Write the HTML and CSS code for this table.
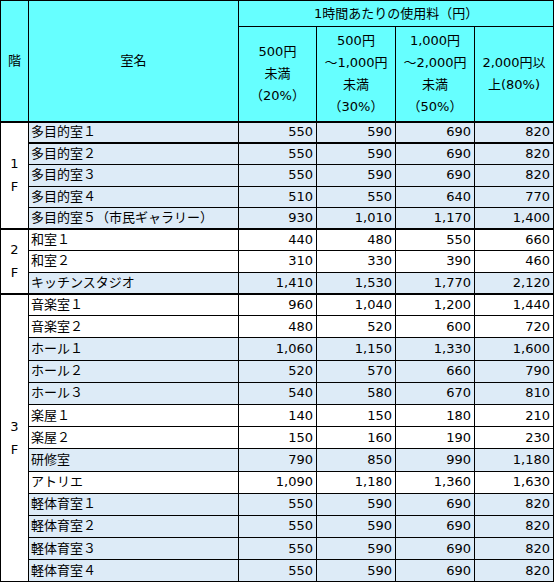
FILE: index.html
```html
<!DOCTYPE html>
<html lang="ja">
<head>
<meta charset="utf-8">
<title>使用料</title>
<link rel="stylesheet" href="styles.css">
</head>
<body>
<table class="fees">
  <colgroup>
    <col class="c-floor"><col class="c-name"><col class="c-num1"><col class="c-num"><col class="c-num"><col class="c-num">
  </colgroup>
  <thead>
    <tr class="h1">
      <th rowspan="2">階</th>
      <th rowspan="2">室名</th>
      <th colspan="4">1時間あたりの使用料（円）</th>
    </tr>
    <tr class="h2">
      <th>500円<br>未満<br>（20%）</th>
      <th>500円<br>～1,000円<br>未満<br>（30%）</th>
      <th>1,000円<br>～2,000円<br>未満<br>（50%）</th>
      <th>2,000円以<br>上(80%)</th>
    </tr>
  </thead>
  <tbody class="f12">
    <tr class="b thick"><td class="floor" rowspan="5">1<br>F</td><td class="name">多目的室１</td><td>550</td><td>590</td><td>690</td><td>820</td></tr>
    <tr class="b thick"><td class="name">多目的室２</td><td>550</td><td>590</td><td>690</td><td>820</td></tr>
    <tr class="b"><td class="name">多目的室３</td><td>550</td><td>590</td><td>690</td><td>820</td></tr>
    <tr class="b"><td class="name">多目的室４</td><td>510</td><td>550</td><td>640</td><td>770</td></tr>
    <tr class="b"><td class="name">多目的室５（市民ギャラリー）</td><td>930</td><td>1,010</td><td>1,170</td><td>1,400</td></tr>
  </tbody>
  <tbody class="f12">
    <tr class="w thick"><td class="floor" rowspan="3">2<br>F</td><td class="name">和室１</td><td>440</td><td>480</td><td>550</td><td>660</td></tr>
    <tr class="w"><td class="name">和室２</td><td>310</td><td>330</td><td>390</td><td>460</td></tr>
    <tr class="b"><td class="name">キッチンスタジオ</td><td>1,410</td><td>1,530</td><td>1,770</td><td>2,120</td></tr>
  </tbody>
  <tbody class="f3">
    <tr class="w thick"><td class="floor" rowspan="13">3<br>F</td><td class="name">音楽室１</td><td>960</td><td>1,040</td><td>1,200</td><td>1,440</td></tr>
    <tr class="w"><td class="name">音楽室２</td><td>480</td><td>520</td><td>600</td><td>720</td></tr>
    <tr class="b"><td class="name">ホール１</td><td>1,060</td><td>1,150</td><td>1,330</td><td>1,600</td></tr>
    <tr class="b"><td class="name">ホール２</td><td>520</td><td>570</td><td>660</td><td>790</td></tr>
    <tr class="b"><td class="name">ホール３</td><td>540</td><td>580</td><td>670</td><td>810</td></tr>
    <tr class="w"><td class="name">楽屋１</td><td>140</td><td>150</td><td>180</td><td>210</td></tr>
    <tr class="w"><td class="name">楽屋２</td><td>150</td><td>160</td><td>190</td><td>230</td></tr>
    <tr class="b"><td class="name">研修室</td><td>790</td><td>850</td><td>990</td><td>1,180</td></tr>
    <tr class="w"><td class="name">アトリエ</td><td>1,090</td><td>1,180</td><td>1,360</td><td>1,630</td></tr>
    <tr class="b"><td class="name">軽体育室１</td><td>550</td><td>590</td><td>690</td><td>820</td></tr>
    <tr class="b"><td class="name">軽体育室２</td><td>550</td><td>590</td><td>690</td><td>820</td></tr>
    <tr class="b"><td class="name">軽体育室３</td><td>550</td><td>590</td><td>690</td><td>820</td></tr>
    <tr class="b"><td class="name">軽体育室４</td><td>550</td><td>590</td><td>690</td><td>820</td></tr>
  </tbody>
</table>
</body>
</html>
```
FILE: styles.css
```css
html, body {
  margin: 0;
  padding: 0;
  background: #ffffff;
}
body {
  font-family: "DejaVu Sans", "Noto Sans CJK JP", sans-serif;
  font-size: 13px;
  color: #000000;
}
.fees {
  border-collapse: collapse;
  table-layout: fixed;
  width: 553px;
}
.c-floor { width: 28px; }
.c-name { width: 210px; }
.c-num1 { width: 78px; }
.c-num { width: 79px; }
.fees th, .fees td {
  border: 1px solid #000000;
  padding: 0 3px;
  line-height: 22px;
  font-weight: normal;
  overflow: hidden;
  white-space: nowrap;
}
.fees th {
  background: #66ffff;
  text-align: center;
  vertical-align: middle;
}
.h1 { height: 26px; }
.h2 { height: 95px; }
.h2 th { line-height: 22px; }
.fees tbody.f12 tr { height: 21.5px; }
.fees tbody.f3 tr { height: 22.2px; }
.fees td {
  text-align: right;
  vertical-align: middle;
  padding: 0 3px 0 2px;
  line-height: 18px;
}
.fees td.name { text-align: left; }
.fees td.floor {
  text-align: center;
  background: #ffffff;
  line-height: 23px;
  padding: 0;
}
.fees tr.b td { background: #ddebf7; }
.fees tr.w td { background: #ffffff; }
.fees tr.b td.floor { background: #ffffff; }
.fees thead tr.h2 th { border-bottom: 2px solid #000000; }
.fees tr.thick td { border-top: 2px solid #000000; }
```
